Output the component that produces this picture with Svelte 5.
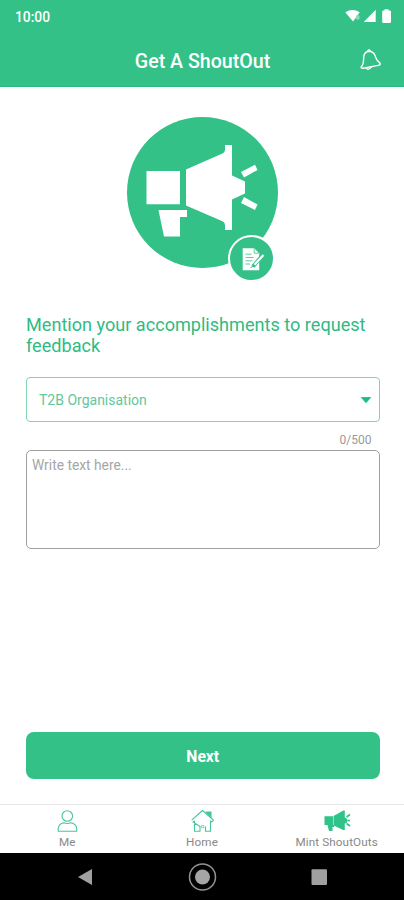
<script>
  let message = $state('');
</script>

<div class="screen">
  <header>
    <div class="status">
      <span class="time">10:00</span>
      <svg width="48" height="16" viewBox="344 8 48 16" fill="#fff">
        <path d="M345.300 12.300Q352.500 7.600 359.800 12.300L353 21.500Z" />
        <path d="M356 15.500h3.500v4h-3.500z" fill="#8bdab8" />
        <path d="M375.700 9.800V22H363.800Z" />
        <path d="M384.500 9.300h4v1.200h1.200q1.300 0 1.300 1.300V21.700q0 1.300-1.300 1.300h-6.200q-1.300 0-1.300-1.300V11.800q0-1.300 1.300-1.300h1z" />
      </svg>
    </div>
    <div class="titlebar">
      <h1>Get A ShoutOut</h1>
      <svg class="bell" width="24" height="24" viewBox="358 48 24 24" fill="none" stroke="#fff" stroke-width="1.4" stroke-linejoin="round" stroke-linecap="round">
        <path d="M361.200 66.800C364.200 64.500 363.300 59 363.900 55.700Q364.900 51.600 368.800 51.200Q373.300 51.300 374.900 55.300C376.300 58.800 376.200 60.900 380.100 63.200Q380.600 65.200 378.200 65.400L363 68.200Q360.800 68.400 361.200 66.800Z" />
        <path d="M367.600 51.300Q368 49.400 369.700 50.100L370.200 51.300M366.200 68Q368.300 70.800 371.300 67.100" />
      </svg>
    </div>
  </header>

  <main>
    <svg class="hero" width="156" height="170" viewBox="124 114 156 170">
      <circle cx="202.500" cy="192.500" r="75.500" fill="#33c188" />
      <g fill="#fff">
        <path d="M146.500 171H180V204.300H146.500Z" />
        <path d="M186 169.500L223 153.300Q225 152 225 149.500V145H232V175.500L245 181.500V193.500L232 199.500V230H225V225.500Q225 222.500 223 221.500L186 205.500Z" />
        <path d="M158.500 210H187V217H180V236.500H164Z" />
        <path d="M241 172L255 164.800L257.500 170L244 177.500Z" />
        <path d="M244 197L257.500 204.500L255 210L241 203Z" />
      </g>
      <circle cx="251.500" cy="258.500" r="22.500" fill="#33c188" stroke="#fff" stroke-width="2" />
      <path d="M242.700 248.200H254.200L259.200 253.200V270.300H242.700Z" fill="#fff" />
      <path d="M254.200 248.500V253.200H259M245.500 254.200H251.500M245.500 257.500H253.500M245.500 260.800H252.500M245.500 264H250" fill="none" stroke="#33c188" stroke-width=".8" />
      <path d="M253 266.500L263 254.800" stroke="#33c188" stroke-width="4" />
      <path d="M254.500 264.700L263.500 255" stroke="#fff" stroke-width="2.200" />
      <path d="M250.500 267.500L254 266" stroke="#33c188" />
    </svg>
    <h2>Mention your accomplishments to request feedback</h2>
    <button class="select">
      <span>T2B Organisation</span>
      <svg width="12" height="8" viewBox="0 0 12 8"><path d="M1.300 1.500H10.700L6 6.700Z" fill="#1ebb7c" stroke="#1ebb7c" stroke-width=".8" stroke-linejoin="round" /></svg>
    </button>
    <div class="count">{message.length}/500</div>
    <textarea placeholder="Write text here..." maxlength="500" bind:value={message}></textarea>
    <button class="next">Next</button>
  </main>

  <nav class="tabs">
    <a href="#me">
      <svg width="28" height="24" viewBox="53.500 809 28 24" fill="none" stroke="#45c798" stroke-width="1.100">
        <circle cx="67.800" cy="816" r="5.300" />
        <path d="M58.700 831.200V828.500Q59.200 823.600 64.300 822.700Q68 824.200 71.300 822.700Q76.800 823.700 77.200 828.500V831.200Z" />
      </svg>
      <span>Me</span>
    </a>
    <a href="#home">
      <svg width="28" height="24" viewBox="188 809 28 24" fill="none" stroke="#45c798" stroke-width="1.100" stroke-linejoin="round">
        <path d="M191.700 820.200L202.500 810.500L213.500 820.200L212 822L210.500 821V831.200H205.500V826.500M200 826.500V831.200H194.500V821L193 822Z" />
        <path d="M206 812H211V817.500Z" fill="#45c798" />
        <circle cx="202.700" cy="826.500" r="1.300" stroke-opacity=".65" />
      </svg>
      <span>Home</span>
    </a>
    <a href="#shoutouts">
      <svg width="30" height="24" viewBox="322 809 30 24" fill="#2fc38a">
        <path d="M324.500 816.200H333V825H324.500ZM333.500 816L343.300 810.500H344.800V817.500Q347.500 818 347.500 820.500Q347.500 823 344.800 823.500V830H343.300L333.500 825.500Z" />
        <path d="M327.500 825H334V827H332.500V831H329Z" />
        <path d="M346.500 817L350 814.500M347.500 820.500H350M346.500 823.500L350 826" fill="none" stroke="#2fc38a" stroke-width="1.600" />
      </svg>
      <span>Mint ShoutOuts</span>
    </a>
  </nav>

  <div class="system">
    <svg width="30" height="30" viewBox="70 862 30 30"><path d="M78 877L92 869V885Z" fill="#a0a0a0" /></svg>
    <svg width="30" height="30" viewBox="0 0 30 30"><circle cx="15.500" cy="15" r="13" fill="none" stroke="#929292" stroke-width="1.500" /><circle cx="15.500" cy="15" r="7.500" fill="#a5a5a5" /></svg>
    <svg width="30" height="30" viewBox="0 0 30 30"><rect x="7.500" y="7.300" width="15.500" height="15.700" rx="1" fill="#a0a0a0" /></svg>
  </div>
</div>

<style>
  :global(body) { margin: 0; background: #fff; }
  .screen { width: 404px; height: 900px; display: flex; flex-direction: column; overflow: hidden; background: #fff; font-family: Roboto, sans-serif; }
  .screen, .screen * { box-sizing: border-box; }
  svg { display: block; flex: none; }
  header { height: 87px; flex: none; background: #33c188; color: #fff; border-bottom: 1px solid #29b87e; }
  .status { height: 34px; padding: 0 12px 2px 15px; display: flex; align-items: center; justify-content: space-between; }
  .time { font-size: 13.800px; line-height: 16px; font-weight: 500; padding-top: 1px; }
  .titlebar { height: 52px; display: grid; grid-template-columns: 46px 1fr 46px; align-items: center; }
  h1 { grid-column: 2; margin: 0; padding: 3px 0 0 1px; text-align: center; font-size: 19.600px; line-height: 24px; font-weight: 500; }
  .bell { margin-bottom: 1px; }
  main { flex: 1; min-height: 0; display: flex; flex-direction: column; padding: 27px 24.500px 25px 26px; }
  .hero { margin-left: 98px; }
  h2 { margin: 30px 0 0; font-size: 18.100px; line-height: 21px; font-weight: 400; color: #2fbb83; }
  button { font-family: inherit; }
  .select { margin-top: 21px; height: 45px; flex: none; display: flex; align-items: center; justify-content: space-between; padding: 0 7px 0 12px; border: 1px solid #83d3b0; border-radius: 4px; background: #fff; color: #62c79d; font-size: 14px; }
  .count { margin-top: 10px; padding-right: 8px; text-align: right; font-size: 12px; line-height: 16px; color: #999; }
  textarea { margin-top: 2px; height: 99px; flex: none; resize: none; border: 1px solid #a0a0a0; border-radius: 5px; padding: 5px; font: 13.800px/18px Roboto, sans-serif; background: #fff; outline: none; }
  textarea::placeholder { color: #a6a6a6; opacity: 1; }
  .next { margin-top: auto; height: 47px; flex: none; border: 0; border-radius: 8px; background: #33c188; color: #fff; font-size: 15.700px; font-weight: 700; padding: 2px 0 0; }
  .tabs { height: 49px; flex: none; display: flex; border-top: 1px solid #e6e6e6; padding-top: 4px; }
  .tabs a { flex: 1; display: flex; flex-direction: column; align-items: center; text-decoration: none; color: #888; font-size: 11.700px; line-height: 13px; letter-spacing: .1px; gap: 3px; }
  .system { height: 47px; flex: none; background: #000; display: flex; justify-content: space-between; align-items: center; padding: 0 70px; }
</style>
